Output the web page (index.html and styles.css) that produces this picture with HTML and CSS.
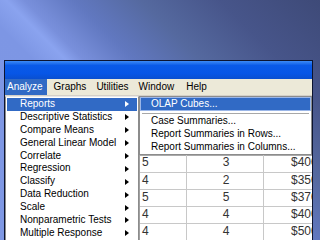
FILE: index.html
```html
<!DOCTYPE html>
<html>
<head>
<meta charset="utf-8">
<link rel="stylesheet" href="styles.css">
</head>
<body>
<div class="slide">
  <div class="window">
    <div class="titlebar"></div>
    <div class="menubar">
      <span class="mb-item active">Analyze</span>
      <span class="mb-item">Graphs</span>
      <span class="mb-item">Utilities</span>
      <span class="mb-item">Window</span>
      <span class="mb-item help">Help</span>
    </div>
    <div class="body">
      <div class="dropdown">
        <div class="dd-item sel"><span>Reports</span><i class="arrow"></i></div>
        <div class="dd-item"><span>Descriptive Statistics</span><i class="arrow"></i></div>
        <div class="dd-item"><span>Compare Means</span><i class="arrow"></i></div>
        <div class="dd-item"><span>General Linear Model</span><i class="arrow"></i></div>
        <div class="dd-item"><span>Correlate</span><i class="arrow"></i></div>
        <div class="dd-item"><span>Regression</span><i class="arrow"></i></div>
        <div class="dd-item"><span>Classify</span><i class="arrow"></i></div>
        <div class="dd-item"><span>Data Reduction</span><i class="arrow"></i></div>
        <div class="dd-item"><span>Scale</span><i class="arrow"></i></div>
        <div class="dd-item"><span>Nonparametric Tests</span><i class="arrow"></i></div>
        <div class="dd-item"><span>Multiple Response</span><i class="arrow"></i></div>
      </div>
      <div class="right">
        <div class="submenu">
          <div class="sm-item sel">OLAP Cubes...</div>
          <div class="sep"></div>
          <div class="sm-item">Case Summaries...</div>
          <div class="sm-item">Report Summaries in Rows...</div>
          <div class="sm-item">Report Summaries in Columns...</div>
        </div>
        <div class="grid">
          <div class="row"><span class="c1">5</span><span class="c2">3</span><span class="c3">$400</span></div>
          <div class="row"><span class="c1">4</span><span class="c2">2</span><span class="c3">$350</span></div>
          <div class="row"><span class="c1">5</span><span class="c2">5</span><span class="c3">$370</span></div>
          <div class="row"><span class="c1">4</span><span class="c2">4</span><span class="c3">$400</span></div>
          <div class="row"><span class="c1">4</span><span class="c2">4</span><span class="c3">$500</span></div>
        </div>
      </div>
    </div>
  </div>
</div>
</body>
</html>
```

FILE: styles.css
```css
html, body {
  margin: 0;
  padding: 0;
  width: 320px;
  height: 240px;
  overflow: hidden;
}
.slide {
  width: 320px;
  height: 240px;
  overflow: hidden;
  background: linear-gradient(45deg, #7f98e4 0%, #7d96e4 38%, #8aa3ef 44%, #7990dc 47%, #6178c0 56%, #55699f 68%, #47558a 82%, #3e4a78 100%);
  padding-top: 60px;
  padding-left: 4px;
  box-sizing: border-box;
  font-family: "Liberation Sans", Arial, sans-serif;
  font-size: 10px;
}
.window {
  width: 307px;
  height: 182px;
  border: 1px solid #0c1430;
  background: #ffffff;
  overflow: hidden;
}
.titlebar {
  height: 18px;
  background: linear-gradient(180deg, #3d8bf6 0%, #0a5ae8 25%, #0756e6 70%, #0a4fd0 100%);
}
.menubar {
  height: 16px;
  background: #ece9d8;
  display: flex;
  align-items: center;
  border-bottom: 1px solid #d4d0c8;
}
.mb-item {
  padding: 0 5px;
  height: 16px;
  line-height: 16px;
  color: #000;
}
.mb-item.help {
  padding-left: 7px;
}
.mb-item.active {
  background: #316ac5;
  color: #fff;
  padding: 0 4px 0 2px;
  margin-right: 2px;
}
.body {
  display: flex;
  align-items: flex-start;
}
.dropdown {
  width: 130px;
  border: 1px solid #8c8c8c;
  border-top-color: #e8e8e8;
  background: #fff;
  padding: 1px 1px 2px;
  box-shadow: 1px 1px 0 #7a7a7a;
}
.dd-item {
  height: 12.9px;
  line-height: 12.9px;
  padding: 0 8px 0 13px;
  display: flex;
  align-items: center;
  justify-content: space-between;
  color: #000;
}
.dd-item.sel {
  background: #316ac5;
  color: #fff;
}
.arrow {
  width: 0;
  height: 0;
  border-top: 3px solid transparent;
  border-bottom: 3px solid transparent;
  border-left: 4px solid #000;
}
.dd-item.sel .arrow {
  border-left-color: #fff;
}
.right {
  flex: 1;
  display: flex;
  flex-direction: column;
}
.submenu {
  border: 1px solid #8c8c8c;
  background: #fff;
  padding: 1px 1px 1px;
  box-shadow: 1px 1px 0 #aaa;
}
.sm-item {
  height: 12.8px;
  line-height: 12.8px;
  padding-left: 10px;
  color: #000;
}
.sm-item.sel {
  background: #316ac5;
  color: #fff;
  height: 12px;
  line-height: 12px;
  outline: 1px solid #9ab6e8;
}
.sep {
  height: 1px;
  background: #a8a8a8;
  margin: 3px 1px 1px;
}
.grid {
  border-left: 1px solid #a0a0a0;
}
.row {
  display: grid;
  grid-template-columns: 47px 77px 1fr;
  height: 16.2px;
  border-bottom: 1px solid #c8c8c8;
  font-size: 12px;
  color: #333;
}
.row span {
  padding-left: 2px;
  line-height: 15px;
  border-right: 1px solid #c8c8c8;
  overflow: hidden;
  white-space: nowrap;
}
.row .c2 {
  text-align: center;
}
.row .c3 {
  padding-left: 27px;
  border-right: none;
}
```
